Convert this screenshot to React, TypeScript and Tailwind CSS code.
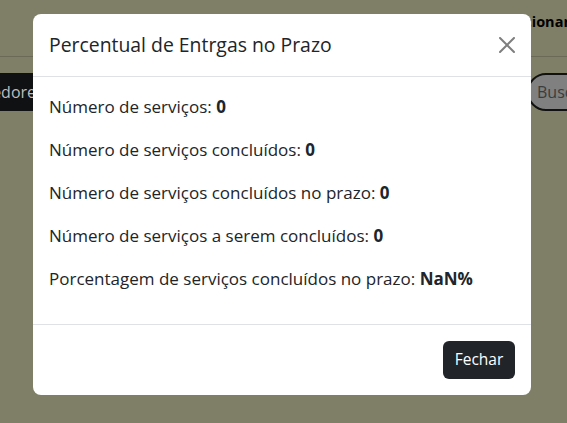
import React from 'react';

const font = { fontFamily: '"Segoe UI", "Open Sans", "Noto Sans", sans-serif' };

const rows: { label: string; value: string }[] = [
  { label: 'Número de serviços:', value: '0' },
  { label: 'Número de serviços concluídos:', value: '0' },
  { label: 'Número de serviços concluídos no prazo:', value: '0' },
  { label: 'Número de serviços a serem concluídos:', value: '0' },
  { label: 'Porcentagem de serviços concluídos no prazo:', value: 'NaN%' },
];

const App: React.FC = () => {
  return (
    <div className="relative w-[567px] h-[423px] overflow-hidden bg-[#7f7e67]" style={font}>
      {/* page behind the backdrop */}
      <header className="h-[57px] border-b border-[#6a6a56] flex justify-end items-start pt-[11px]">
        <span className="text-[14.5px] font-bold text-black whitespace-nowrap -mr-[3px]">Adicionar</span>
      </header>
      <div className="flex items-center justify-between mt-[16px]">
        <button className="h-[38px] bg-[#101112] text-[#bdbdbd] text-[16px] whitespace-nowrap pl-0 pr-3 -ml-[46px]">Vendedores</button>
        <button className="h-[38px] w-[80px] text-left rounded-full border-2 border-[#111] bg-[#808080] text-[#3c3c3c] text-[16px] whitespace-nowrap pl-[8px] -mr-[40px]">Buscar</button>
      </div>

      {/* modal */}
      <div className="absolute left-[33px] top-[14px] w-[498px] rounded-lg bg-white text-[#212529]">
        <div className="flex items-center justify-between p-4 border-b border-[#dee2e6]">
          <h5 className="text-[19.4px] font-medium leading-[30px]">Percentual de Entrgas no Prazo</h5>
          <button className="w-4 h-4 opacity-50">
            <svg viewBox="0 0 16 16" width="16" height="16" fill="#000">
              <path d="M.293.293a1 1 0 0 1 1.414 0L8 6.586 14.293.293a1 1 0 1 1 1.414 1.414L9.414 8l6.293 6.293a1 1 0 0 1-1.414 1.414L8 9.414l-6.293 6.293a1 1 0 0 1-1.414-1.414L6.586 8 .293 1.707a1 1 0 0 1 0-1.414z" />
            </svg>
          </button>
        </div>
        <div className="p-4">
          {rows.map((r, i) => (
            <p key={i} className="text-[17px] leading-[27px] mb-4">
              {r.label} <b className="font-bold">{r.value}</b>
            </p>
          ))}
        </div>
        <div className="flex justify-end p-3 border-t border-[#dee2e6]">
          <button className="m-1 h-[38px] w-[72px] rounded-md bg-[#212529] text-white text-[15.5px]">Fechar</button>
        </div>
      </div>
    </div>
  );
};

export default App;
